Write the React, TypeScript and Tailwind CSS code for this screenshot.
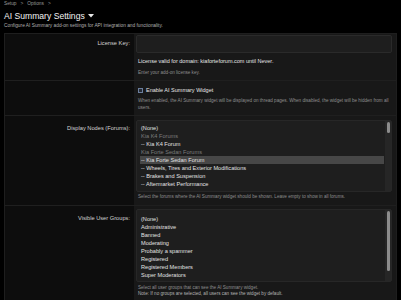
import { ReactNode } from 'react'

// ── Data ──────────────────────────────────────────────────────────────────────

type Opt = { label: string; group?: boolean; selected?: boolean }

const NODE_OPTIONS: Opt[] = [
  { label: '(None)' },
  { label: 'Kia K4 Forums', group: true },
  { label: '-- Kia K4 Forum' },
  { label: 'Kia Forte Sedan Forums', group: true },
  { label: '-- Kia Forte Sedan Forum', selected: true },
  { label: '-- Wheels, Tires and Exterior Modifications' },
  { label: '-- Brakes and Suspension' },
  { label: '-- Aftermarket Performance' },
]

const GROUP_OPTIONS: Opt[] = [
  { label: '(None)' },
  { label: 'Administrative' },
  { label: 'Banned' },
  { label: 'Moderating' },
  { label: 'Probably a spammer' },
  { label: 'Registered' },
  { label: 'Registered Members' },
  { label: 'Super Moderators' },
]

// ── Pieces ────────────────────────────────────────────────────────────────────

function Row({ label, labelPad, children, className }: { label?: string; labelPad: string; children: ReactNode; className: string }) {
  return (
    <div className="grid grid-cols-[129px_1fr] border-b border-[#1f1f1f] last:border-b-0">
      <div className={`bg-[#0d0d0d] pr-[4px] text-right text-[5.7px] leading-[8px] text-[#d4d4d4] ${labelPad}`}>
        {label}
      </div>
      <div className={`bg-[#181818] pl-[2px] pr-[4px] ${className}`}>{children}</div>
    </div>
  )
}

function ListBox({ options, height, padTop, thumb }: { options: Opt[]; height: string; padTop: string; thumb: string }) {
  return (
    <div className={`flex rounded-[2px] border border-[#272727] bg-[#1e1e1e] ${height}`}>
      <div className={`flex-1 overflow-hidden pl-[3px] pr-[1px] ${padTop}`}>
        {options.map((o) => (
          <div
            key={o.label}
            className={[
              'h-[8px] truncate pl-[1px] text-[5.6px] leading-[8px]',
              o.group ? 'text-[#7c7c7c]' : 'text-[#e2e2e2]',
              o.selected ? 'bg-[#474747]' : '',
            ].join(' ')}
          >
            {o.label}
          </div>
        ))}
      </div>
      <div className="w-[6px] bg-[#262626] px-[1.5px] pt-[1px]">
        <div className={`rounded-full bg-[#8c8c8c] ${thumb}`} />
      </div>
    </div>
  )
}

// ── Page ──────────────────────────────────────────────────────────────────────

export default function App() {
  return (
    <div className="h-[300px] w-[401px] overflow-hidden bg-black px-[4px] font-['Liberation_Sans',Arial,sans-serif]">
      {/* Header */}
      <div className="flex gap-[4px] pt-[1px] text-[4.8px] leading-[6px] text-[#9a9a9a]">
        <span>Setup</span>
        <span>&gt;</span>
        <span>Options</span>
        <span>&gt;</span>
      </div>
      <div className="mt-[3.5px] flex h-[11px] items-center gap-[3px] text-[8.6px] leading-[11px] text-[#f2f2f2]">
        <span>AI Summary Settings</span>
        <svg width="6" height="4" viewBox="0 0 6 4">
          <path d="M0 0 L6 0 L3 3.5 Z" fill="#e8e8e8" />
        </svg>
      </div>
      <div className="mt-[1px] h-[6px] text-[4.8px] leading-[6px] text-[#b0b0b0]">
        Configure AI Summary add-on settings for API integration and functionality.
      </div>

      {/* Options panel */}
      <div className="mt-[4px] overflow-hidden border border-[#1e1e1e]">
        <Row label="License Key:" labelPad="pt-[5px]" className="pt-[1px] pb-[3px]">
          <div className="h-[18px] rounded-[2px] border border-[#2a2a2a] bg-[#1e1e1e]" />
          <div className="mt-[4px] pl-[2px] text-[5.5px] leading-[8px] text-[#e6e6e6]">
            License valid for domain: kiaforteforum.com until Never.
          </div>
          <div className="mt-[4px] pl-[2px] text-[4.6px] leading-[8px] text-[#8e8e8e]">
            Enter your add-on license key.
          </div>
        </Row>

        <Row labelPad="" className="pt-[6px] pb-[4px]">
          <div className="flex h-[8px] items-center gap-[3px] pl-[2px]">
            <span className="h-[5px] w-[5px] border border-[#6c7f9e] bg-[#262b35]" />
            <span className="text-[5.5px] text-[#e6e6e6]">Enable AI Summary Widget</span>
          </div>
          <div className="mt-[2px] pl-[2px] text-[4.6px] leading-[7px] text-[#8e8e8e]">
            When enabled, the AI Summary widget will be displayed on thread pages. When disabled, the widget will be hidden from all users.
          </div>
        </Row>

        <Row label="Display Nodes (Forums):" labelPad="pt-[8px]" className="pt-[4px] pb-[4px]">
          <ListBox options={NODE_OPTIONS} height="h-[72px]" padTop="pt-[3px]" thumb="h-[11px]" />
          <div className="mt-[1px] h-[8px] pl-[2px] text-[4.6px] leading-[8px] text-[#8e8e8e]">
            Select the forums where the AI Summary widget should be shown. Leave empty to show in all forums.
          </div>
        </Row>

        <Row label="Visible User Groups:" labelPad="pt-[8px]" className="pt-[3px] pb-[8px]">
          <ListBox options={GROUP_OPTIONS} height="h-[73px]" padTop="pt-[5px]" thumb="h-[60px]" />
          <div className="mt-[3px] pl-[2px] text-[4.6px] leading-[6.5px] text-[#8e8e8e]">
            Select all user groups that can see the AI Summary widget.
          </div>
          <div className="pl-[2px] text-[4.6px] leading-[6.5px] text-[#b4b4b4]">
            Note: If no groups are selected, all users can see the widget by default.
          </div>
        </Row>
      </div>
    </div>
  )
}
